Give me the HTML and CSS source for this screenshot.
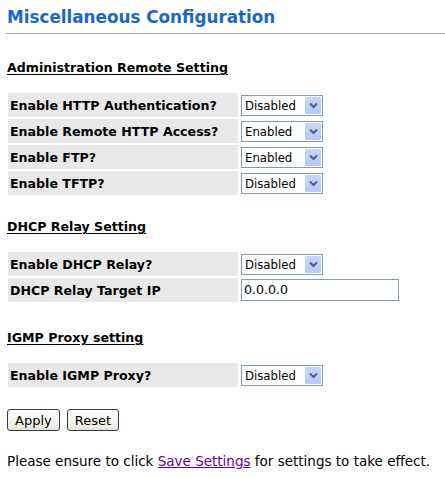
FILE: index.html
```html
<!DOCTYPE html>
<html>
<head>
<meta charset="utf-8">
<link rel="stylesheet" href="styles.css">
</head>
<body>
<div class="page">
  <h1 class="title">Miscellaneous Configuration</h1>
  <div class="rule"></div>

  <section class="group group-admin">
    <h2 class="group-title">Administration Remote Setting</h2>
    <div class="form-grid">
      <div class="label">Enable HTTP Authentication?</div>
      <div class="value"><div class="select"><span class="select-text">Disabled</span><span class="select-btn"><svg width="9" height="7" viewBox="0 0 9 7"><path d="M1 1.5 L4.5 5 L8 1.5" fill="none" stroke="#4d6185" stroke-width="2"/></svg></span></div></div>
      <div class="label">Enable Remote HTTP Access?</div>
      <div class="value"><div class="select"><span class="select-text">Enabled</span><span class="select-btn"><svg width="9" height="7" viewBox="0 0 9 7"><path d="M1 1.5 L4.5 5 L8 1.5" fill="none" stroke="#4d6185" stroke-width="2"/></svg></span></div></div>
      <div class="label">Enable FTP?</div>
      <div class="value"><div class="select"><span class="select-text">Enabled</span><span class="select-btn"><svg width="9" height="7" viewBox="0 0 9 7"><path d="M1 1.5 L4.5 5 L8 1.5" fill="none" stroke="#4d6185" stroke-width="2"/></svg></span></div></div>
      <div class="label">Enable TFTP?</div>
      <div class="value"><div class="select"><span class="select-text">Disabled</span><span class="select-btn"><svg width="9" height="7" viewBox="0 0 9 7"><path d="M1 1.5 L4.5 5 L8 1.5" fill="none" stroke="#4d6185" stroke-width="2"/></svg></span></div></div>
    </div>
  </section>

  <section class="group group-dhcp">
    <h2 class="group-title">DHCP Relay Setting</h2>
    <div class="form-grid">
      <div class="label">Enable DHCP Relay?</div>
      <div class="value"><div class="select"><span class="select-text">Disabled</span><span class="select-btn"><svg width="9" height="7" viewBox="0 0 9 7"><path d="M1 1.5 L4.5 5 L8 1.5" fill="none" stroke="#4d6185" stroke-width="2"/></svg></span></div></div>
      <div class="label">DHCP Relay Target IP</div>
      <div class="value"><div class="text-input">0.0.0.0</div></div>
    </div>
  </section>

  <section class="group group-igmp">
    <h2 class="group-title">IGMP Proxy setting</h2>
    <div class="form-grid">
      <div class="label">Enable IGMP Proxy?</div>
      <div class="value"><div class="select"><span class="select-text">Disabled</span><span class="select-btn"><svg width="9" height="7" viewBox="0 0 9 7"><path d="M1 1.5 L4.5 5 L8 1.5" fill="none" stroke="#4d6185" stroke-width="2"/></svg></span></div></div>
    </div>
  </section>

  <div class="actions">
    <button class="btn">Apply</button>
    <button class="btn">Reset</button>
  </div>

  <p class="note">Please ensure to click <a class="link" href="#">Save Settings</a> for settings to take effect.</p>
</div>
</body>
</html>
```

FILE: styles.css
```css
html, body {
  margin: 0;
  padding: 0;
  background: #ffffff;
}

body {
  font-family: "DejaVu Sans", Verdana, sans-serif;
  color: #000;
}

.page {
  padding: 7px 0 0 7px;
}

.title {
  margin: 0;
  font-size: 16.8px;
  line-height: 20px;
  font-weight: bold;
  color: #1a66c9;
}

.rule {
  height: 1px;
  background: #a9a9a9;
  margin: 6px 0 0 -1px;
}

.group-title {
  margin: 0;
  font-size: 12.6px;
  line-height: 16px;
  font-weight: bold;
  text-decoration: underline;
  text-underline-offset: 2px;
}

.group-admin {
  margin-top: 26px;
}

.group-dhcp {
  margin-top: 24px;
}

.group-igmp {
  margin-top: 28px;
}

.form-grid {
  display: grid;
  grid-template-columns: 230px auto;
  grid-auto-rows: 24px;
  gap: 2px;
  margin: 17px 0 0 1px;
}

.label {
  background: #e8e8e8;
  font-size: 12.6px;
  font-weight: bold;
  display: flex;
  align-items: center;
  padding-left: 2px;
}

.value {
  display: flex;
  align-items: center;
  padding-left: 1px;
}

.select {
  width: 82px;
  height: 21px;
  box-sizing: border-box;
  border: 1px solid #7f9db9;
  display: flex;
  align-items: stretch;
  background: #fff;
}

.select-text {
  flex: 1;
  font-family: "DejaVu Sans Condensed", "DejaVu Sans", sans-serif;
  font-size: 13px;
  line-height: 19px;
  padding-left: 3px;
  color: #000;
}

.select-btn {
  width: 16px;
  margin: 1px 1px 1px 0;
  background: linear-gradient(#c6d6fc, #b5c9f7);
  border-radius: 1px;
  display: flex;
  align-items: center;
  justify-content: center;
}

.text-input {
  width: 158px;
  height: 22px;
  box-sizing: border-box;
  border: 1px solid #7f9db9;
  font-size: 12.6px;
  line-height: 20px;
  padding-left: 2px;
  background: #fff;
}

.actions {
  display: flex;
  gap: 7px;
  margin-top: 22px;
}

.btn {
  font-family: "DejaVu Sans", Verdana, sans-serif;
  font-size: 13px;
  height: 22px;
  padding: 0 7px;
  border: 1px solid #2b3f5a;
  border-radius: 3px;
  background: linear-gradient(#fefefd, #f1efe4 80%, #e3e0d2);
  color: #000;
}

.note {
  margin: 22px 0 0;
  font-size: 13.5px;
  line-height: 16px;
}

.link {
  color: #660099;
  text-decoration: underline;
}
```
